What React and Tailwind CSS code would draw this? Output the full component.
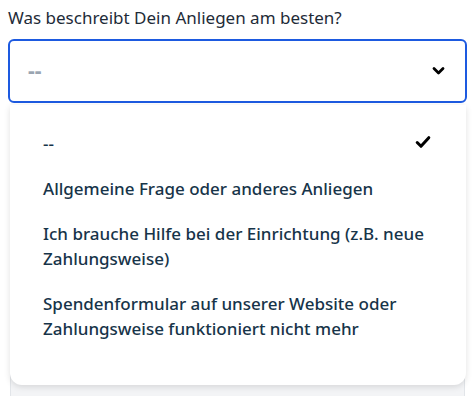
import React from 'react';

const options = [
  '--',
  'Allgemeine Frage oder anderes Anliegen',
  'Ich brauche Hilfe bei der Einrichtung (z.B. neue Zahlungsweise)',
  'Spendenformular auf unserer Website oder Zahlungsweise funktioniert nicht mehr',
];

const Check = () => (
  <svg width="16" height="14" viewBox="0 0 16 14" fill="none">
    <path d="M2.2 7.5 L6 11.3 L13.8 2.7" stroke="#000" strokeWidth="3" strokeLinecap="round" strokeLinejoin="round" />
  </svg>
);

const Chevron = () => (
  <svg width="13" height="10" viewBox="0 0 13 10" fill="none">
    <path d="M2 2.5 L6.5 7 L11 2.5" stroke="#000" strokeWidth="2.8" strokeLinecap="round" strokeLinejoin="round" />
  </svg>
);

export default function App() {
  return (
    <div className="w-[475px] h-[396px] bg-white overflow-hidden px-2 pt-[6px]" style={{ fontFamily: '"Noto Sans", "Open Sans", sans-serif' }}>
      <label className="block text-[17px] leading-6 text-[#1e2b38]">Was beschreibt Dein Anliegen am besten?</label>

      <div className="relative mt-[9px]">
        <div className="h-[64px] border-2 border-[#1d5ae0] rounded-md flex items-center justify-between pl-[18px] pr-[20px]">
          <span className="text-[#9aa5b1] text-[21px] font-bold">--</span>
          <Chevron />
        </div>

        <div className="mt-[3px] mx-[2px] h-[300px] border border-[#e2e5e9] bg-[#f3f4f6] rounded-t-md" />

        <div className="absolute left-[2px] right-[1px] top-[66px] bg-white rounded-b-xl shadow-[0_2px_6px_rgba(0,0,0,0.12)] pt-[16px] pb-[34px] pl-[33px] pr-[18px]">
          {options.map((o, i) => (
            <div key={i} className="flex items-start justify-between py-[10px] text-[17px] leading-[25px] font-medium text-[#173449]">
              <span>{o}</span>
              {i === 0 && <span className="mt-[4px] mr-[17px] shrink-0"><Check /></span>}
            </div>
          ))}
        </div>
      </div>
    </div>
  );
}
